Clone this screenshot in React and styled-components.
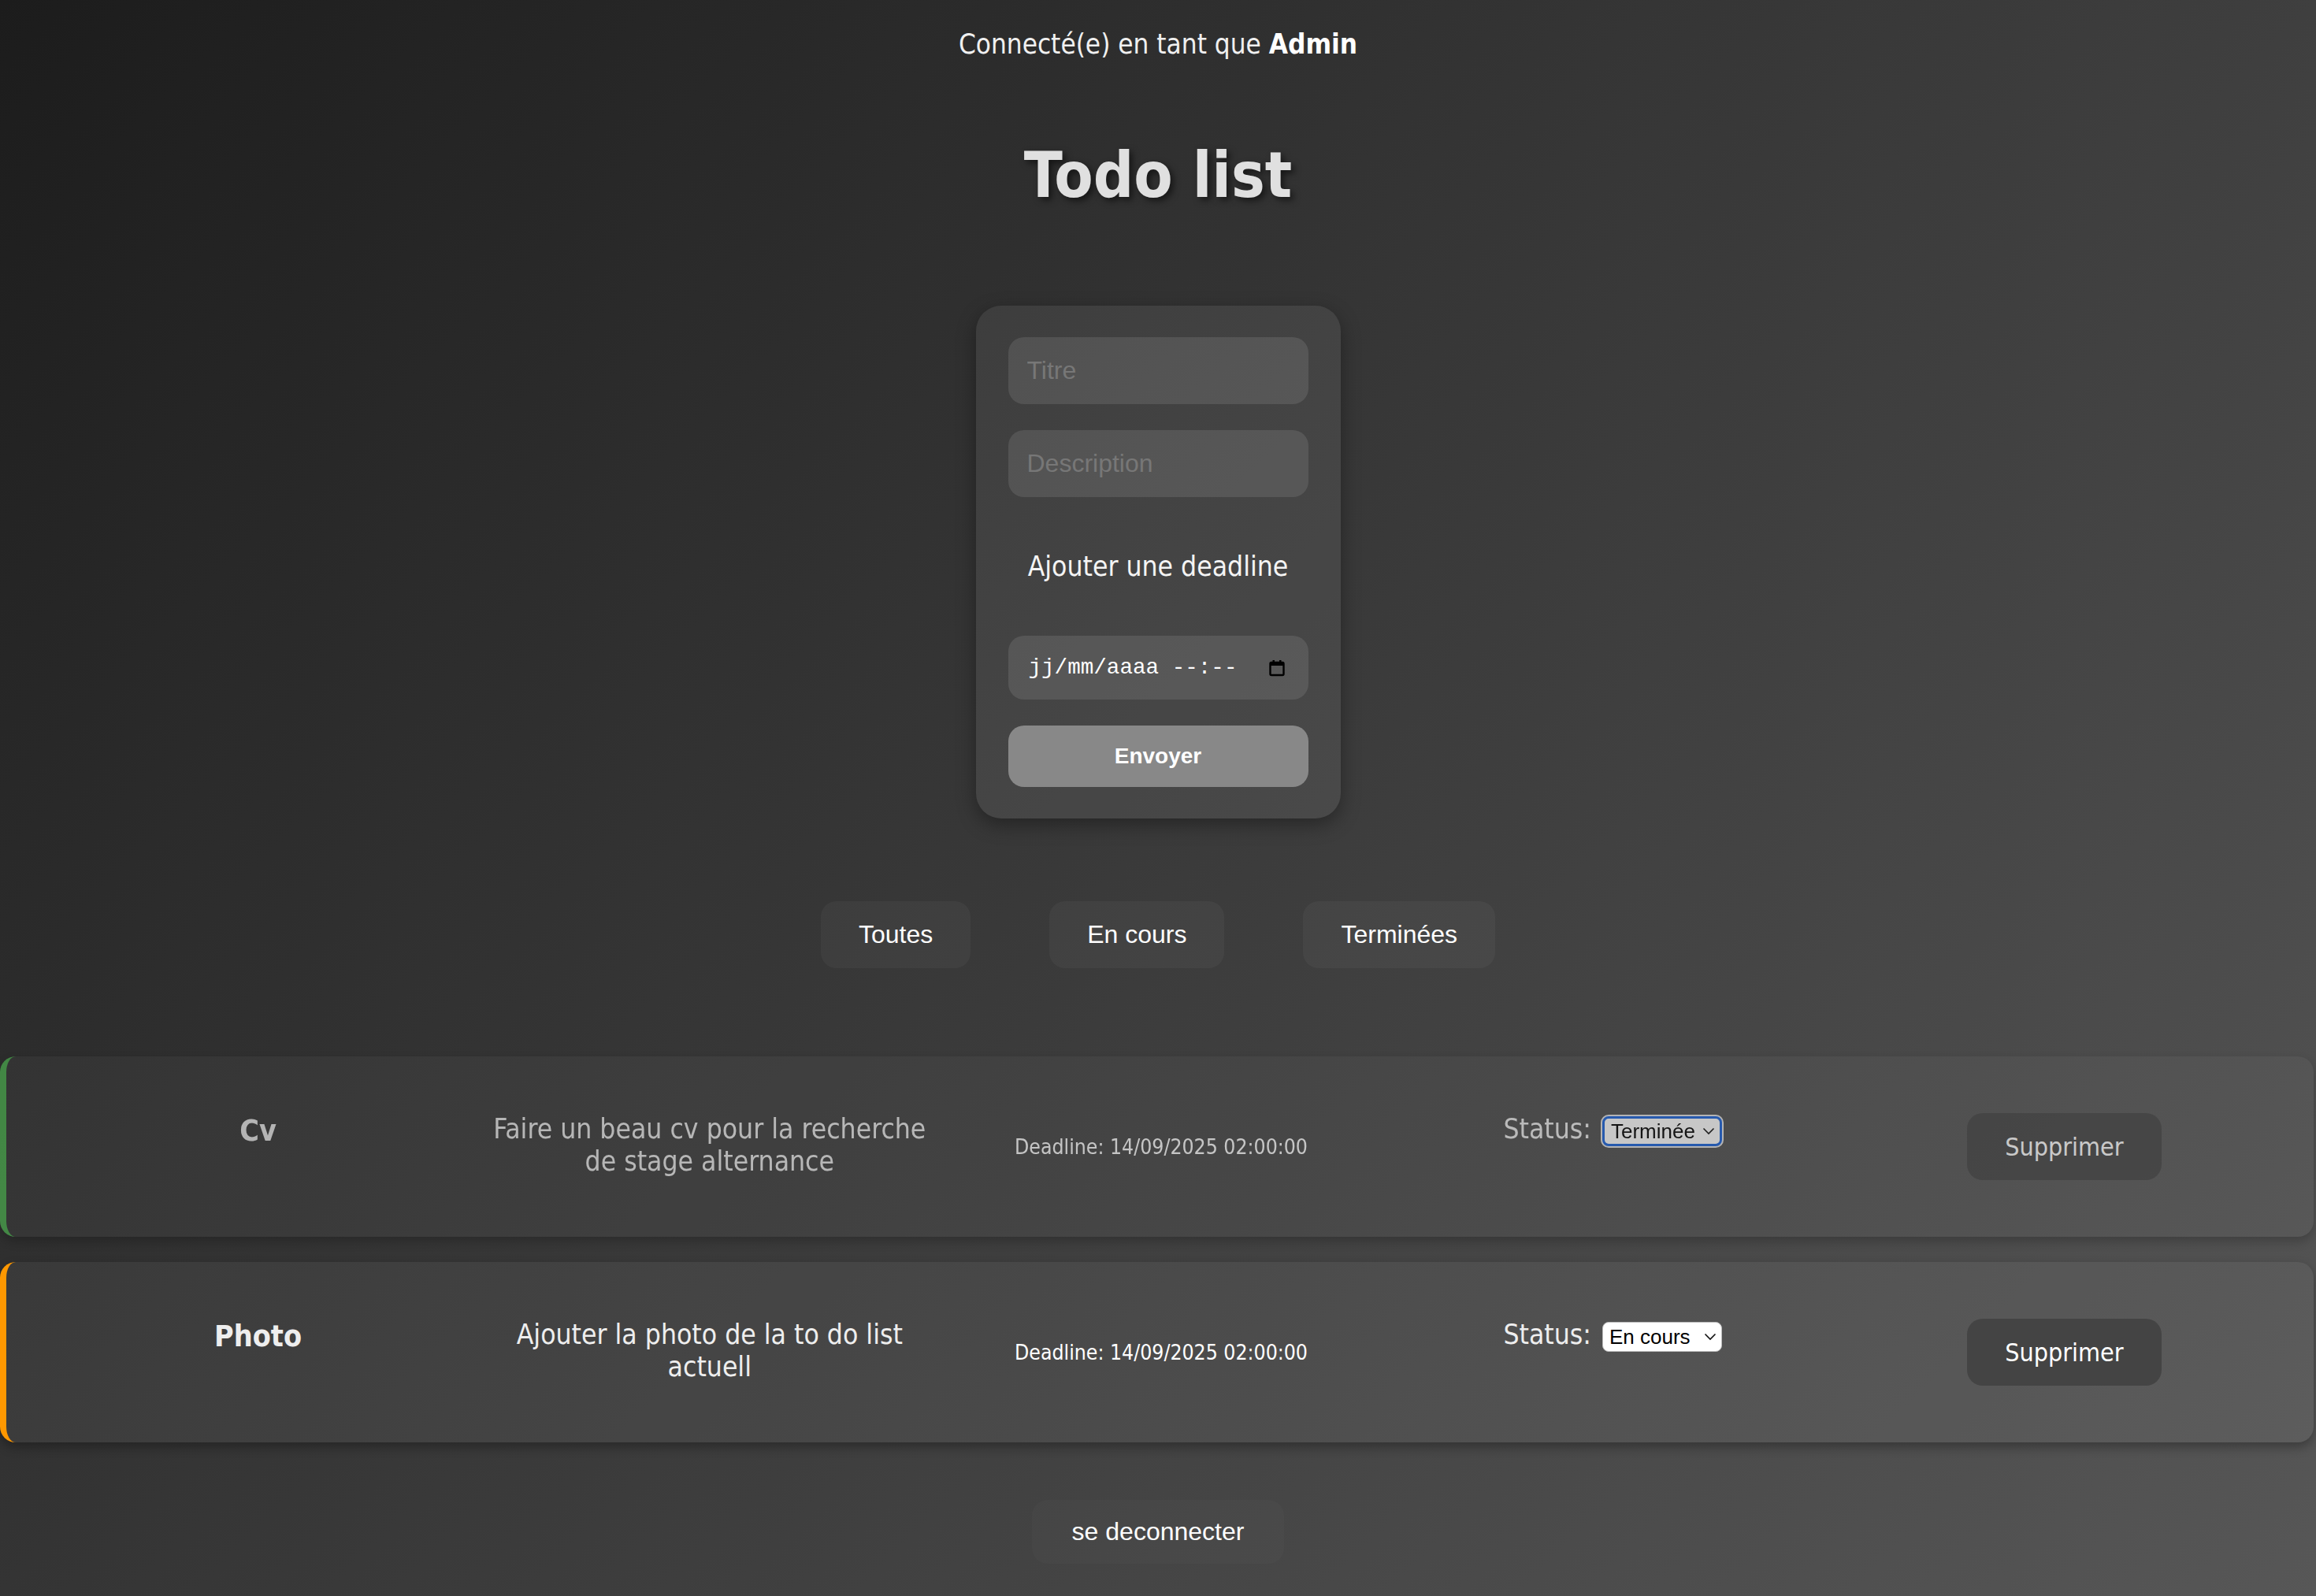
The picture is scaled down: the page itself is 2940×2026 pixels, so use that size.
import styled, { createGlobalStyle, css } from "styled-components";

const GlobalStyle = createGlobalStyle`
  html, body {
    margin: 0;
    padding: 0;
  }
  body {
    font-family: "DejaVu Sans Condensed", "DejaVu Sans", Tahoma, sans-serif;
    font-stretch: condensed;
    color: #eee;
    background: #1e1e1e;
  }
  * {
    box-sizing: border-box;
  }
`;

const Page = styled.div`
  min-height: 2026px;
  display: flex;
  flex-direction: column;
  align-items: center;
  background: linear-gradient(135deg, #1c1c1c 0%, #575757 100%);
`;

const Header = styled.p`
  margin: 0;
  padding-top: 34px;
  font-size: 34.8px;
  line-height: 44px;
  color: #f0f0f0;

  b {
    color: #fff;
  }
`;

const Title = styled.h1`
  margin: 97px 0 0;
  font-size: 80px;
  line-height: 96px;
  color: #e0e0e0;
  text-shadow: 4px 4px 8px rgba(0, 0, 0, 0.55);
`;

const FormCard = styled.form`
  margin-top: 117px;
  width: 463px;
  padding: 40px 41px;
  display: flex;
  flex-direction: column;
  border-radius: 32px;
  background: rgba(255, 255, 255, 0.07);
  box-shadow: 0 8px 24px rgba(0, 0, 0, 0.35);
`;

const TextInput = styled.input`
  height: 85px;
  margin: 0 0 33px;
  padding: 0 24px;
  border: none;
  border-radius: 20px;
  outline: none;
  background: rgba(255, 255, 255, 0.1);
  font: 32px "Liberation Sans", Arial, sans-serif;
  color: #fff;

  &::placeholder {
    color: #777;
  }
`;

const DeadlineLabel = styled.p`
  margin: 33px 0 66px;
  text-align: center;
  font-size: 35.2px;
  line-height: 44px;
  color: #f4f4f4;
`;

const DateField = styled.div`
  height: 81px;
  margin-bottom: 33px;
  padding: 0 30px 0 26px;
  display: flex;
  align-items: center;
  justify-content: space-between;
  border-radius: 20px;
  background: rgba(255, 255, 255, 0.1);
  font: 27.6px "Liberation Mono", "DejaVu Sans Mono", monospace;
  color: #fff;
`;

const SubmitButton = styled.button`
  height: 78px;
  border: none;
  border-radius: 20px;
  background: #888;
  color: #fff;
  font: bold 28px "Liberation Sans", Arial, sans-serif;
`;

const Filters = styled.div`
  margin-top: 105px;
  display: flex;
  gap: 100px;
`;

const PlainButton = styled.button`
  height: 85px;
  padding: 0 48px;
  border: none;
  border-radius: 20px;
  background: rgba(255, 255, 255, 0.04);
  color: #fff;
  font: 32px "Liberation Sans", Arial, sans-serif;
`;

const TaskList = styled.div`
  margin-top: 112px;
  align-self: stretch;
  padding-right: 3px;
  display: flex;
  flex-direction: column;
  gap: 32px;
`;

const TaskCard = styled.div`
  min-height: 229px;
  padding: 0 30px 0 33px;
  display: grid;
  grid-template-columns: repeat(5, 1fr);
  align-items: center;
  border-left: 8px solid ${(p) => p.$accent};
  border-radius: 20px;
  background: rgba(255, 255, 255, 0.05);
  box-shadow: 0 6px 14px rgba(0, 0, 0, 0.3);
  opacity: ${(p) => (p.$done ? 0.7 : 1)};
`;

const TaskTitle = styled.h3`
  margin: 0 0 42px;
  text-align: center;
  font-size: 37.44px;
  color: #eee;
`;

const TaskDesc = styled.p`
  margin: 0 0 6px;
  text-align: center;
  font-size: 35.2px;
  line-height: 41px;
  color: #eee;
`;

const Deadline = styled.p`
  margin: 0;
  text-align: center;
  font-size: 26.4px;
  color: #fff;
`;

const StatusRow = styled.div`
  margin-bottom: 44px;
  display: flex;
  align-items: baseline;
  justify-content: center;
  gap: 14px;
  font-size: 35.2px;
  color: #eee;
`;

const Select = styled.div`
  width: 152px;
  height: 38px;
  padding: 0 6px 0 8px;
  display: inline-flex;
  align-items: center;
  justify-content: space-between;
  border-radius: 8px;
  background: #fff;
  border: 1px solid #bbb;
  color: #000;
  font: 26px "Liberation Sans", Arial, sans-serif;

  ${(p) =>
    p.$focused &&
    css`
      border: 3px solid #1b64db;
      box-shadow: 0 0 0 2px #e4e4e4;
    `}
`;

const DeleteButton = styled(PlainButton)`
  justify-self: center;
  background: #444;
  font-family: inherit;
  font-size: 32px;
`;

const LogoutButton = styled(PlainButton)`
  margin-top: 73px;
  height: 81px;
  padding: 0 51px;
  background: rgba(255, 255, 255, 0.02);
`;

const Chevron = () => (
  <svg width="16" height="10" viewBox="0 0 16 10">
    <path d="M1.5 1.5 L8 8 L14.5 1.5" fill="none" stroke="#111" strokeWidth="1.6" />
  </svg>
);

const CalendarIcon = () => (
  <svg width="20" height="22" viewBox="0 0 20 22">
    <rect x="1.5" y="4" width="17" height="16" rx="1.5" fill="none" stroke="#000" strokeWidth="2.4" />
    <rect x="1.5" y="4" width="17" height="4" fill="#000" />
    <rect x="4.5" y="1" width="2.5" height="4" fill="#000" />
    <rect x="13" y="1" width="2.5" height="4" fill="#000" />
  </svg>
);

const tasks = [
  {
    title: "Cv",
    desc: "Faire un beau cv pour la recherche de stage alternance",
    deadline: "14/09/2025 02:00:00",
    status: "Terminée",
    done: true,
  },
  {
    title: "Photo",
    desc: "Ajouter la photo de la to do list actuell",
    deadline: "14/09/2025 02:00:00",
    status: "En cours",
    done: false,
  },
];

function App() {
  return (
    <Page>
      <GlobalStyle />
      <Header>
        Connecté(e) en tant que <b>Admin</b>
      </Header>
      <Title>Todo list</Title>

      <FormCard onSubmit={(e) => e.preventDefault()}>
        <TextInput placeholder="Titre" />
        <TextInput placeholder="Description" />
        <DeadlineLabel>Ajouter une deadline</DeadlineLabel>
        <DateField>
          <span>jj/mm/aaaa --:--</span>
          <CalendarIcon />
        </DateField>
        <SubmitButton type="submit">Envoyer</SubmitButton>
      </FormCard>

      <Filters>
        <PlainButton>Toutes</PlainButton>
        <PlainButton>En cours</PlainButton>
        <PlainButton>Terminées</PlainButton>
      </Filters>

      <TaskList>
        {tasks.map((t) => (
          <TaskCard key={t.title} $done={t.done} $accent={t.done ? "#4caf50" : "#ff9800"}>
            <TaskTitle>{t.title}</TaskTitle>
            <TaskDesc>{t.desc}</TaskDesc>
            <Deadline>Deadline: {t.deadline}</Deadline>
            <StatusRow>
              Status:
              <Select $focused={t.done}>
                {t.status}
                <Chevron />
              </Select>
            </StatusRow>
            <DeleteButton>Supprimer</DeleteButton>
          </TaskCard>
        ))}
      </TaskList>

      <LogoutButton>se deconnecter</LogoutButton>
    </Page>
  );
}

export default App;
